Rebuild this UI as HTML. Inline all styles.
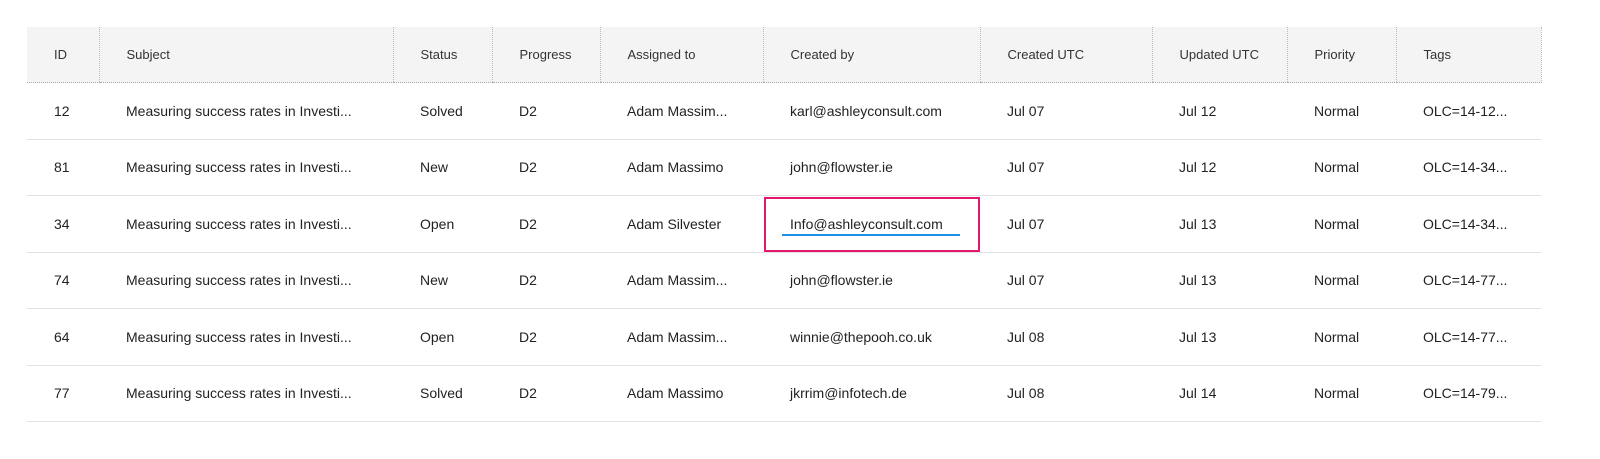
<!DOCTYPE html>
<html><head><style>
body{margin:0;width:1600px;height:459px;background:#fff;font-family:"Liberation Sans",sans-serif;position:relative;overflow:hidden}
table{position:absolute;left:27px;top:27px;border-collapse:collapse;table-layout:fixed;width:1514px}
th{height:55px;background:#f4f4f4;font-weight:normal;font-size:13px;color:#333;text-align:left;padding:0 0 0 27px;border-bottom:1px dotted #aaa;border-left:1px dotted #bbb;white-space:nowrap}
th:first-child{border-left:none}
th:last-child{border-right:1px dotted #bbb}
td{height:55.5px;font-size:14px;color:#222;padding:0 0 0 27px;border-bottom:1px solid #e2e2e2;white-space:nowrap;overflow:hidden}
.hl{position:absolute;left:764px;top:197px;width:212px;height:51px;border:2px solid #e3176f}
.ul{position:absolute;left:782px;top:234px;width:178px;height:2px;background:#1e90e8}
</style></head><body>
<table>
<colgroup><col style="width:72px"><col style="width:294px"><col style="width:99px"><col style="width:108px"><col style="width:163px"><col style="width:217px"><col style="width:172px"><col style="width:135px"><col style="width:109px"><col style="width:145px"></colgroup>
<tr><th>ID</th><th>Subject</th><th>Status</th><th>Progress</th><th>Assigned to</th><th>Created by</th><th>Created UTC</th><th>Updated UTC</th><th>Priority</th><th>Tags</th></tr>
<tr><td>12</td><td>Measuring success rates in Investi...</td><td>Solved</td><td>D2</td><td>Adam Massim...</td><td>karl@ashleyconsult.com</td><td>Jul 07</td><td>Jul 12</td><td>Normal</td><td>OLC=14-12...</td></tr>
<tr><td>81</td><td>Measuring success rates in Investi...</td><td>New</td><td>D2</td><td>Adam Massimo</td><td>john@flowster.ie</td><td>Jul 07</td><td>Jul 12</td><td>Normal</td><td>OLC=14-34...</td></tr>
<tr><td>34</td><td>Measuring success rates in Investi...</td><td>Open</td><td>D2</td><td>Adam Silvester</td><td>Info@ashleyconsult.com</td><td>Jul 07</td><td>Jul 13</td><td>Normal</td><td>OLC=14-34...</td></tr>
<tr><td>74</td><td>Measuring success rates in Investi...</td><td>New</td><td>D2</td><td>Adam Massim...</td><td>john@flowster.ie</td><td>Jul 07</td><td>Jul 13</td><td>Normal</td><td>OLC=14-77...</td></tr>
<tr><td>64</td><td>Measuring success rates in Investi...</td><td>Open</td><td>D2</td><td>Adam Massim...</td><td>winnie@thepooh.co.uk</td><td>Jul 08</td><td>Jul 13</td><td>Normal</td><td>OLC=14-77...</td></tr>
<tr><td>77</td><td>Measuring success rates in Investi...</td><td>Solved</td><td>D2</td><td>Adam Massimo</td><td>jkrrim@infotech.de</td><td>Jul 08</td><td>Jul 14</td><td>Normal</td><td>OLC=14-79...</td></tr>
</table>
<div class="hl"></div><div class="ul"></div>
</body></html>
